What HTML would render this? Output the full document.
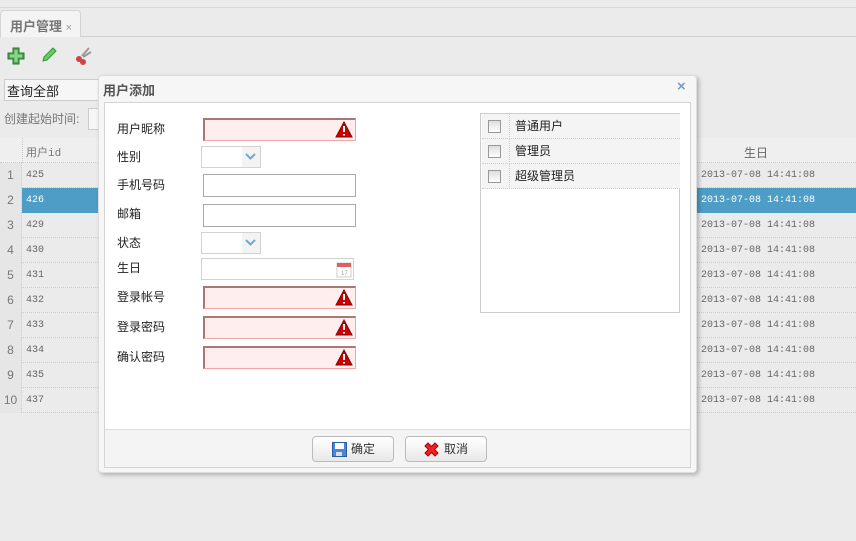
<!DOCTYPE html>
<html><head><meta charset="utf-8"><style>
*{box-sizing:border-box;margin:0;padding:0}
body{width:856px;height:541px;background:#ebebeb;font-family:"Liberation Sans","Noto Sans CJK SC",sans-serif;font-size:12px;color:#333;position:relative;overflow:hidden}
.a{position:absolute}
.mono{font-family:"Liberation Mono","Noto Sans CJK SC",monospace;font-size:10px;color:#666}
.row{position:absolute;left:0;width:856px;height:25px;border-bottom:1px dotted #ccc}
.num{position:absolute;left:0;width:22px;height:25px;line-height:25px;text-align:center;border-right:1px dotted #ccc;color:#777;background:#e6e6e6}
.inp{position:absolute;left:203px;width:153px;height:23px;border:1px solid #a9a9a9;background:#fff}
.err{border:1px solid #f3a6a6;border-left-color:#a77;border-top-color:#a77;border-width:2px 1px 1px 2px;background:#ffeeee}
.sel{position:absolute;left:201px;width:60px;height:22px;border:1px solid #d3d3d3;background:#fff}
.sel:after{content:"";position:absolute;right:0;top:0;width:18px;height:20px;background:#f3f3f3}
.lbl{position:absolute;left:117px;font-size:12px;color:#222}
.warn{position:absolute;right:2px;top:1px}
.role{position:absolute;left:1px;width:198px;height:25px;border-bottom:1px dotted #ccc;background:#f4f4f4}
.role .cb{position:absolute;left:6px;top:6px;width:13px;height:13px;border:1px solid #999;background:linear-gradient(#ddd,#fff)}
.role .t{position:absolute;left:27px;top:0;height:25px;line-height:25px;border-left:1px dotted #ccc;padding-left:5px;color:#222}
.btn{position:absolute;top:436px;width:82px;height:26px;border:1px solid #bbb;border-radius:4px;background:linear-gradient(#fff,#e8e8e8);line-height:24px;font-size:12px;color:#333}
</style></head><body>
<div class="a" style="left:0;top:7px;width:856px;height:1px;background:#d8d8d8"></div>
<div class="a" style="left:0;top:36px;width:856px;height:1px;background:#cfcfcf"></div>
<div class="a" style="left:0;top:10px;width:81px;height:27px;background:#f4f4f4;border:1px solid #d4d4d4;border-bottom:none;border-radius:4px 4px 0 0;padding:5px 0 0 9px;font-weight:bold;color:#777;font-size:13px">用户管理 <span style="font-weight:normal;color:#99a;font-size:11px">×</span></div>
<svg class="a" style="left:6px;top:46px" width="20" height="20" viewBox="0 0 20 20"><path d="M7 2h6v5h5v6h-5v5H7v-5H2V7h5z" fill="#4aa64a" stroke="#2d7a2d"/><path d="M8.5 4h3v4.5H16v3h-4.5V16h-3v-4.5H4v-3h4.5z" fill="#8fd18f"/></svg>
<svg class="a" style="left:40px;top:46px" width="18" height="18"><path d="M3 15l1-4 9-9 3 3-9 9z" fill="#6c6" stroke="#393"/></svg>
<svg class="a" style="left:73px;top:46px" width="20" height="20"><path d="M9 10L16 2M10 11L18 6" stroke="#999" stroke-width="2"/><circle cx="6" cy="13" r="3" fill="#c44"/><circle cx="10" cy="16" r="3" fill="#c44"/></svg>
<div class="a" style="left:4px;top:79px;width:96px;height:22px;border:1px solid #ccc;background:#f6f6f6;padding:1px 2px;font-size:13px;color:#222">查询全部</div>
<div class="a" style="left:4px;top:110px;color:#777;font-size:12px">创建起始时间:</div>
<div class="a" style="left:88px;top:108px;width:12px;height:22px;border:1px solid #ccc;background:#f6f6f6"></div>
<div class="row" style="top:138px;background:#efefef"><div class="num" style="border:none;background:none"></div><div class="a" style="left:22px;height:25px;border-left:1px dotted #ccc"></div><span class="a mono" style="left:26px;top:6px;color:#777;font-size:11px">用户id</span><span class="a" style="left:744px;top:6px;color:#666;font-size:12px">生日</span></div>
<div class="row" style="top:163px"><div class="num">1</div><span class="a mono" style="left:26px;top:7px">425</span><span class="a mono" style="left:701px;top:7px">2013-07-08 14:41:08</span></div>
<div class="row" style="top:188px"><div class="num">2</div><div class="a" style="left:22px;top:0;width:834px;height:25px;background:#4e9dc6"></div><span class="a mono" style="left:26px;top:7px;color:#fff">426</span><span class="a mono" style="left:701px;top:7px;color:#fff">2013-07-08 14:41:08</span></div>
<div class="row" style="top:213px"><div class="num">3</div><span class="a mono" style="left:26px;top:7px">429</span><span class="a mono" style="left:701px;top:7px">2013-07-08 14:41:08</span></div>
<div class="row" style="top:238px"><div class="num">4</div><span class="a mono" style="left:26px;top:7px">430</span><span class="a mono" style="left:701px;top:7px">2013-07-08 14:41:08</span></div>
<div class="row" style="top:263px"><div class="num">5</div><span class="a mono" style="left:26px;top:7px">431</span><span class="a mono" style="left:701px;top:7px">2013-07-08 14:41:08</span></div>
<div class="row" style="top:288px"><div class="num">6</div><span class="a mono" style="left:26px;top:7px">432</span><span class="a mono" style="left:701px;top:7px">2013-07-08 14:41:08</span></div>
<div class="row" style="top:313px"><div class="num">7</div><span class="a mono" style="left:26px;top:7px">433</span><span class="a mono" style="left:701px;top:7px">2013-07-08 14:41:08</span></div>
<div class="row" style="top:338px"><div class="num">8</div><span class="a mono" style="left:26px;top:7px">434</span><span class="a mono" style="left:701px;top:7px">2013-07-08 14:41:08</span></div>
<div class="row" style="top:363px"><div class="num">9</div><span class="a mono" style="left:26px;top:7px">435</span><span class="a mono" style="left:701px;top:7px">2013-07-08 14:41:08</span></div>
<div class="row" style="top:388px"><div class="num">10</div><span class="a mono" style="left:26px;top:7px">437</span><span class="a mono" style="left:701px;top:7px">2013-07-08 14:41:08</span></div>

<div class="a" style="left:98px;top:75px;width:599px;height:398px;background:#f6f6f6;border:1px solid #ddd;border-radius:4px;box-shadow:2px 2px 4px rgba(0,0,0,.25)"></div>
<div class="a" style="left:103px;top:80px;font-weight:bold;font-size:13px;color:#555">用户添加</div>
<div class="a" style="left:677px;top:78px;font-weight:bold;color:#7a9cc0;font-size:15px">×</div>
<div class="a" style="left:104px;top:102px;width:587px;height:366px;border:1px solid #d4d4d4;background:#f4f4f4"></div>
<div class="a" style="left:105px;top:103px;width:585px;height:327px;background:#fff;border-bottom:1px solid #ddd"></div>

<div class="lbl" style="top:120px">用户昵称</div>
<div class="inp err" style="top:118px"><svg class="warn" width="18" height="17"><path d="M9 1L17 16H1z" fill="#c00" stroke="#800"/><path d="M9 5v6M9 13v1.5" stroke="#fff" stroke-width="2"/></svg></div>
<div class="lbl" style="top:148px">性别</div>
<div class="sel" style="top:146px"><svg class="a" style="right:4px;top:6px;z-index:1" width="11" height="8"><path d="M1 1l4.5 4.5L10 1" stroke="#6aa9d8" stroke-width="2" fill="none"/></svg></div>
<div class="lbl" style="top:176px">手机号码</div>
<div class="inp" style="top:174px"></div>
<div class="lbl" style="top:205px">邮箱</div>
<div class="inp" style="top:204px"></div>
<div class="lbl" style="top:234px">状态</div>
<div class="sel" style="top:232px"><svg class="a" style="right:4px;top:6px;z-index:1" width="11" height="8"><path d="M1 1l4.5 4.5L10 1" stroke="#6aa9d8" stroke-width="2" fill="none"/></svg></div>
<div class="lbl" style="top:259px">生日</div>
<div class="a" style="left:201px;top:258px;width:153px;height:22px;border:1px solid #d3d3d3;background:#fff"><svg class="a" style="right:1px;top:2px" width="16" height="17"><rect x="1" y="2" width="14" height="14" fill="#fff" stroke="#ccc"/><rect x="1" y="2" width="14" height="4" fill="#e06060"/><text x="5" y="14" font-size="6" fill="#999" font-family="Liberation Sans">17</text></svg></div>
<div class="lbl" style="top:288px">登录帐号</div>
<div class="inp err" style="top:286px"><svg class="warn" width="18" height="17"><path d="M9 1L17 16H1z" fill="#c00" stroke="#800"/><path d="M9 5v6M9 13v1.5" stroke="#fff" stroke-width="2"/></svg></div>
<div class="lbl" style="top:318px">登录密码</div>
<div class="inp err" style="top:316px"><svg class="warn" width="18" height="17"><path d="M9 1L17 16H1z" fill="#c00" stroke="#800"/><path d="M9 5v6M9 13v1.5" stroke="#fff" stroke-width="2"/></svg></div>
<div class="lbl" style="top:348px">确认密码</div>
<div class="inp err" style="top:346px"><svg class="warn" width="18" height="17"><path d="M9 1L17 16H1z" fill="#c00" stroke="#800"/><path d="M9 5v6M9 13v1.5" stroke="#fff" stroke-width="2"/></svg></div>

<div class="a" style="left:480px;top:113px;width:200px;height:200px;border:1px solid #ccc;background:#fff">
<div class="role" style="top:0"><div class="cb"></div><div class="t">普通用户</div></div>
<div class="role" style="top:25px"><div class="cb"></div><div class="t">管理员</div></div>
<div class="role" style="top:50px"><div class="cb"></div><div class="t">超级管理员</div></div>
</div>

<div class="btn" style="left:312px"><svg class="a" style="left:19px;top:5px" width="15" height="15"><rect x="0.5" y="0.5" width="14" height="14" fill="#4a86d8" stroke="#2a5aa8"/><rect x="3" y="1" width="9" height="6" fill="#fff"/><rect x="4" y="10" width="6" height="4" fill="#ddd"/></svg><span class="a" style="left:38px">确定</span></div>
<div class="btn" style="left:405px"><svg class="a" style="left:17px;top:5px" width="17" height="16"><path d="M2 4l3-3 3.5 3.5L12 1l3 3-3.5 3.5L15 11l-3 3-3.5-3.5L5 14l-3-3 3.5-3.5z" fill="#e22" stroke="#a00"/></svg><span class="a" style="left:38px">取消</span></div>
</body></html>
